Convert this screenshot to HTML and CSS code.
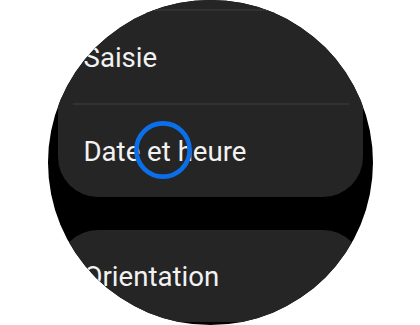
FILE: index.html
```html
<!DOCTYPE html>
<html lang="fr">
<head>
<meta charset="utf-8">
<link rel="stylesheet" href="styles.css">
</head>
<body>
<div class="watch">
  <div class="list">
    <div class="card card-first">
      <div class="row sep">Saisie</div>
      <div class="row sep">Date et heure</div>
    </div>
    <div class="card">
      <div class="row">Orientation</div>
    </div>
  </div>
  <svg class="touch" width="58" height="58" viewBox="0 0 58 58" aria-hidden="true">
    <circle cx="29" cy="29" r="26.6" fill="none" stroke="#0a6fe8" stroke-width="4.6"/>
  </svg>
</div>
</body>
</html>
```

FILE: styles.css
```css
html, body {
  margin: 0;
  padding: 0;
  background: #ffffff;
}

.watch {
  position: relative;
  width: 325px;
  height: 325px;
  margin: 0 auto;
  border-radius: 50%;
  overflow: hidden;
  background: #000000;
}

.list {
  display: flex;
  flex-direction: column;
  gap: 33px;
  padding: 0 10px;
  margin-top: -40px;
}

.card {
  background: #252525;
  border-radius: 40px;
}

.card-first {
  padding-top: 49px;
}

.row {
  display: flex;
  align-items: center;
  height: 92px;
  padding: 0 26px;
  font-family: Roboto, "Liberation Sans", sans-serif;
  font-size: 27.6px;
  color: #f2f2f2;
  position: relative;
}

.sep {
  border-top: 2px solid transparent;
}

.sep::before {
  content: "";
  position: absolute;
  top: -2px;
  left: 15px;
  right: 14px;
  height: 2px;
  background: #323232;
}

.touch {
  position: absolute;
  left: 86px;
  top: 121px;
}
```
